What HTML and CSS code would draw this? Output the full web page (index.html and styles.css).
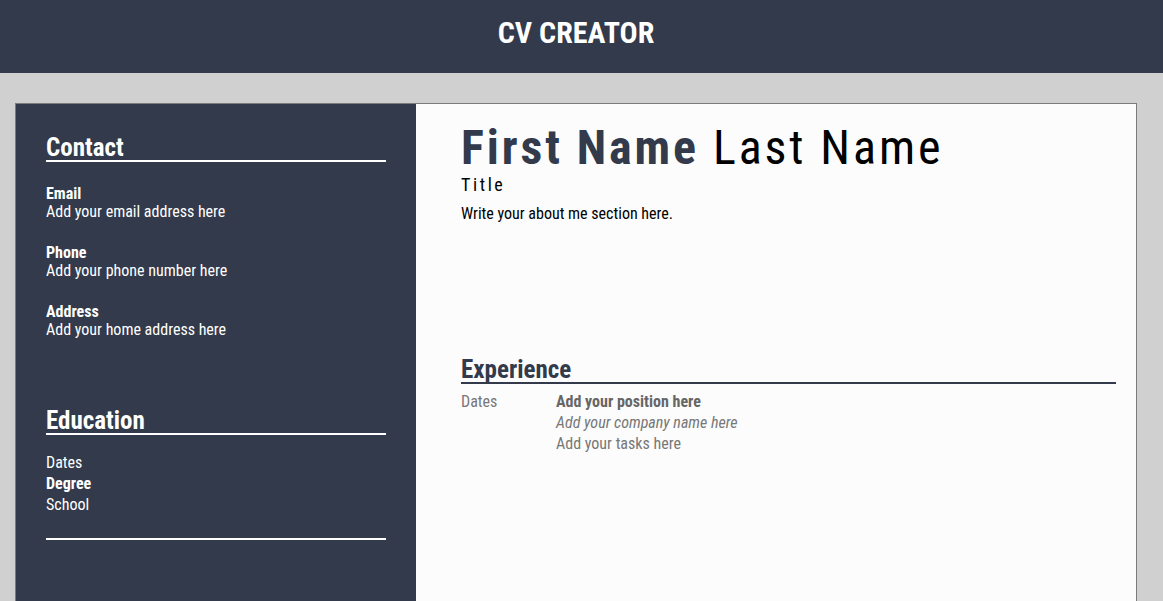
FILE: index.html
```html
<!DOCTYPE html>
<html lang="en">
<head>
<meta charset="utf-8">
<title>CV Creator</title>
<link rel="stylesheet" href="styles.css">
</head>
<body>
<header class="app-header">
  <h1 class="app-title">CV CREATOR</h1>
</header>
<main class="app-main">
  <div class="cv">
    <aside class="cv-side">
      <section class="side-section contact">
        <h2 class="side-heading">Contact</h2>
        <div class="contact-list">
          <div class="contact-item">
            <div class="label">Email</div>
            <div class="value">Add your email address here</div>
          </div>
          <div class="contact-item">
            <div class="label">Phone</div>
            <div class="value">Add your phone number here</div>
          </div>
          <div class="contact-item">
            <div class="label">Address</div>
            <div class="value">Add your home address here</div>
          </div>
        </div>
      </section>
      <section class="side-section education">
        <h2 class="side-heading">Education</h2>
        <div class="edu-item">
          <div class="edu-line">Dates</div>
          <div class="edu-line bold">Degree</div>
          <div class="edu-line">School</div>
        </div>
      </section>
    </aside>
    <section class="cv-body">
      <h1 class="name"><span class="first">First Name</span> <span class="last">Last Name</span></h1>
      <div class="title">Title</div>
      <p class="about">Write your about me section here.</p>
      <section class="experience">
        <h2 class="body-heading">Experience</h2>
        <div class="exp-item">
          <div class="exp-dates">Dates</div>
          <div class="exp-info">
            <div class="exp-line bold">Add your position here</div>
            <div class="exp-line italic">Add your company name here</div>
            <div class="exp-line">Add your tasks here</div>
          </div>
        </div>
      </section>
    </section>
  </div>
</main>
</body>
</html>
```
FILE: styles.css
```css
* { box-sizing: border-box; }

html, body {
  margin: 0;
  padding: 0;
}

body {
  background: #d0d0d0;
  font-family: "Roboto Condensed", "Roboto", "Liberation Sans", sans-serif;
  font-stretch: condensed;
  font-size: 16px;
  color: #000;
}

.app-header {
  height: 73px;
  background: #323a4b;
  display: flex;
  align-items: center;
  justify-content: center;
}

.app-title {
  margin: 0 11px 8px 0;
  color: #fff;
  font-size: 30px;
  font-weight: 700;
  line-height: 1;
}

.app-main {
  padding: 30px 0 0 15px;
}

.cv {
  width: 1122px;
  min-height: 620px;
  border: 1px solid #7a7a7a;
  display: flex;
}

.cv-side {
  width: 400px;
  flex: 0 0 400px;
  background: #323a4b;
  color: #fff;
  padding: 30px 30px 0 30px;
}

.side-heading {
  margin: 0;
  padding-top: 2px;
  font-size: 25px;
  font-weight: 700;
  line-height: 24px;
  border-bottom: 2px solid #fff;
}

.contact-list {
  display: flex;
  flex-direction: column;
  gap: 23px;
  margin-top: 23px;
}

.contact-item {
  line-height: 18px;
}

.label, .bold { font-weight: 700; }
.italic { font-style: italic; }

.education {
  margin-top: 68px;
  padding-bottom: 23px;
  border-bottom: 2px solid #fff;
}

.edu-item {
  margin-top: 17px;
  line-height: 21px;
}

.cv-body {
  flex: 1;
  background: #fcfcfc;
  padding: 20px 20px 0 45px;
}

.name {
  margin: 0;
  font-size: 48px;
  line-height: 48px;
  letter-spacing: 2.9px;
  font-weight: 400;
}

.first {
  font-weight: 700;
  color: #323a4b;
}

.last {
  color: #000;
}

.title {
  margin-top: 2px;
  font-size: 18px;
  line-height: 21px;
  letter-spacing: 2.6px;
}

.about {
  margin: 9px 0 0 0;
  line-height: 19px;
}

.experience {
  margin-top: 133px;
}

.body-heading {
  margin: 0;
  padding-top: 2px;
  font-size: 25px;
  font-weight: 700;
  line-height: 24px;
  color: #323a4b;
  border-bottom: 2px solid #323a4b;
}

.exp-item {
  display: flex;
  margin-top: 7px;
  line-height: 21px;
  color: #777;
}

.exp-dates {
  width: 95px;
  flex: 0 0 95px;
}

.exp-info .bold { color: #666; }
```
